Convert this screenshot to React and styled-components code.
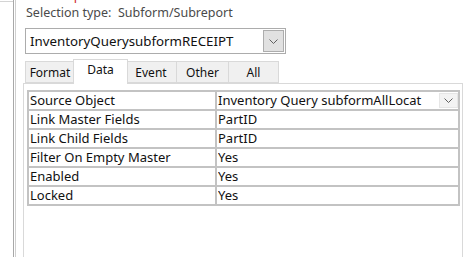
import React from "react";
import styled, { createGlobalStyle } from "styled-components";

const Global = createGlobalStyle`
  html, body { margin: 0; padding: 0; background: #ffffff; }
  body { font-family: "Noto Sans", "Open Sans", sans-serif; }
`;

const Page = styled.div`
  display: flex;
  width: 472px;
  height: 257px;
  overflow: hidden;
  background: #fff;
`;

const Gutter = styled.div`
  width: 14px;
  height: 100%;
  border-right: 1px solid #a8a8a8;
  box-sizing: border-box;
  position: relative;
  &::before {
    content: "";
    position: absolute;
    left: 0;
    right: 0;
    top: 1px;
    border-top: 1px solid #d4d4d4;
  }
`;

const Sheet = styled.div`
  flex: 1;
  margin-left: 1px;
  border-left: 1px solid #d0d0d0;
  display: flex;
  flex-direction: column;
  padding: 0 9px 0 7px;
  min-width: 0;
`;

const Title = styled.div`
  height: 3px;
  width: 18px;
  margin-left: 38px;
  overflow: hidden;
  position: relative;
  color: #d03030;
  font-size: 13px;
  line-height: 13px;
  white-space: nowrap;
  span { position: relative; top: -11px; left: -8px; }
`;

const SelectionType = styled.div`
  height: 21px;
  padding-left: 3px;
  color: #4a4a4a;
  font-size: 12.5px;
  line-height: 19px;
  white-space: pre;
`;

const Combo = styled.div`
  margin: 4px 0 0 2px;
  width: 261px;
  height: 26px;
  box-sizing: border-box;
  border: 1px solid #acacac;
  display: flex;
  align-items: center;
  padding: 1px;
`;

const ComboText = styled.div`
  flex: 1;
  padding-left: 3px;
  font-size: 13.3px;
  color: #111;
`;

const DropButton = styled.div`
  width: ${(p) => p.w}px;
  height: ${(p) => p.h}px;
  flex-shrink: 0;
  box-sizing: border-box;
  background: ${(p) => p.bg};
  border: 1px solid ${(p) => p.bd};
  display: flex;
  align-items: center;
  justify-content: center;
`;

const Chevron = () => (
  <svg width="9" height="5" viewBox="0 0 9 5">
    <path d="M0.5 0.5 L4.5 4.5 L8.5 0.5" fill="none" stroke="#606060" strokeWidth="1" />
  </svg>
);

const TabStrip = styled.div`
  display: flex;
  align-items: flex-end;
  margin-top: 5px;
  padding-left: 2px;
  height: 24px;
  position: relative;
  z-index: 1;
`;

const Tab = styled.div`
  box-sizing: border-box;
  height: ${(p) => (p.active ? 25 : 22)}px;
  width: ${(p) => p.w}px;
  margin: 0 ${(p) => (p.active ? -2 : 0)}px ${(p) => (p.active ? -1 : 0)}px;
  background: ${(p) => (p.active ? "#ffffff" : "#f0f0f0")};
  border: 1px solid #d9d9d9;
  border-bottom: ${(p) => (p.active ? "none" : "1px solid #d9d9d9")};
  border-left: ${(p) => (p.first || p.active ? "1px solid #d9d9d9" : "none")};
  z-index: ${(p) => (p.active ? 2 : 0)};
  font-size: 12px;
  color: #111;
  text-align: center;
  white-space: nowrap;
  line-height: ${(p) => (p.active ? 20 : 22)}px;
`;

const Panel = styled.div`
  flex: 1;
  border: 1px solid #d9d9d9;
  border-bottom: none;
  width: 440px;
  box-sizing: border-box;
  padding: 6px 2px 0 3px;
`;

const Grid = styled.div`
  display: grid;
  grid-template-columns: 186px 1fr;
  gap: 2px;
  padding: 2px;
  background: #c3c3c3;
  width: 433px;
  box-sizing: border-box;
`;

const Cell = styled.div`
  height: 17px;
  background: #fff;
  font-size: 13px;
  line-height: 17px;
  color: #111;
  padding-left: 1px;
  white-space: nowrap;
  overflow: hidden;
  display: flex;
  align-items: center;
  justify-content: space-between;
`;

const CellText = styled.span`
  overflow: hidden;
  flex: 1;
  min-width: 0;
`;

const rows = [
  ["Source Object", "Inventory Query subformAllLocat", true],
  ["Link Master Fields", "PartID"],
  ["Link Child Fields", "PartID"],
  ["Filter On Empty Master", "Yes"],
  ["Enabled", "Yes"],
  ["Locked", "Yes"],
];

const tabs = [
  { label: "Format", w: 50, first: true },
  { label: "Data", w: 55, active: true },
  { label: "Event", w: 51 },
  { label: "Other", w: 52 },
  { label: "All", w: 50 },
];

export default function App() {
  return (
    <Page>
      <Global />
      <Gutter />
      <Sheet>
        <Title><span>Property</span></Title>
        <SelectionType>{"Selection type:  Subform/Subreport"}</SelectionType>
        <Combo>
          <ComboText>InventoryQuerysubformRECEIPT</ComboText>
          <DropButton w={21} h={22} bg="#e1e1e1" bd="#adadad">
            <Chevron />
          </DropButton>
        </Combo>
        <TabStrip>
          {tabs.map((t) => (
            <Tab key={t.label} w={t.w} active={t.active} first={t.first}>
              {t.label}
            </Tab>
          ))}
        </TabStrip>
        <Panel>
          <Grid>
            {rows.map(([name, value, combo]) => (
              <React.Fragment key={name}>
                <Cell>{name}</Cell>
                <Cell>
                  <CellText>{value}</CellText>
                  {combo && (
                    <DropButton w={19} h={15} bg="#f3f3f3" bd="#e6e6e6">
                      <Chevron />
                    </DropButton>
                  )}
                </Cell>
              </React.Fragment>
            ))}
          </Grid>
        </Panel>
      </Sheet>
    </Page>
  );
}
